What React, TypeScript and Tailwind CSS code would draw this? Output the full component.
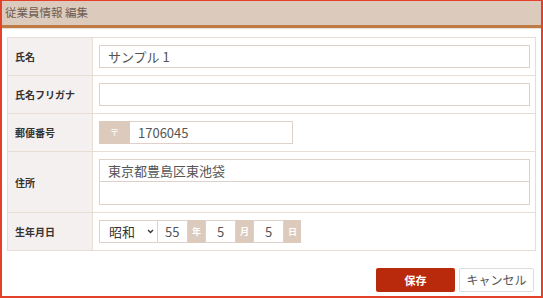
import React from "react";

const font = { fontFamily: '"Noto Sans CJK JP", "Noto Sans", sans-serif' };

const Row: React.FC<{ label: string; children: React.ReactNode; last?: boolean }> = ({ label, children, last }) => (
  <div className={`flex ${last ? "" : "border-b border-[#e8ddd5]"}`}>
    <div className="w-[85px] shrink-0 bg-[#f5f0f0] border-r border-[#e8ddd5] flex items-center pl-[7px] text-[10px] font-bold text-[#333]">
      {label}
    </div>
    <div className="flex-1 pl-[6px] pr-[5px] py-[7px] flex flex-col">{children}</div>
  </div>
);

const Unit: React.FC<{ text: string }> = ({ text }) => (
  <div className="w-[17px] h-[23px] bg-[#dccbbd] text-white text-[9px] font-bold flex items-center justify-center">
    {text}
  </div>
);

export default function App() {
  return (
    <div style={font} className="w-[543px] h-[298px] border-2 border-t border-[#e4412a] bg-white flex flex-col">
      <div className="h-[27px] shrink-0 bg-[#dccbbd] border-b-[3px] border-[#c07a43] flex items-center pl-[3px] text-[11.5px] text-[#6e5d52]">
        従業員情報 編集
      </div>
      <div className="h-px shrink-0 bg-[#eadfd6]" />
      <div className="px-[5px] pt-[8px]">
        <div className="border border-[#e8ddd5] flex flex-col">
          <Row label="氏名">
            <div className="h-[23px] border border-[#ddd1c9] flex items-center pl-[8px] text-[13px] text-[#555]">
              サンプル 1
            </div>
          </Row>
          <Row label="氏名フリガナ">
            <div className="h-[23px] border border-[#ddd1c9]" />
          </Row>
          <Row label="郵便番号">
            <div className="flex">
              <div className="w-[31px] h-[23px] bg-[#dccbbd] text-white text-[9px] flex items-center justify-center">〒</div>
              <div className="w-[163px] h-[23px] border border-[#ddd1c9] border-l-0 flex items-center pl-[8px] text-[13px] text-[#555]">
                1706045
              </div>
            </div>
          </Row>
          <Row label="住所">
            <div className="h-[23px] border border-[#ddd1c9] flex items-center pl-[8px] text-[13px] text-[#555]">
              東京都豊島区東池袋
            </div>
            <div className="h-[23px] border border-[#ddd1c9] border-t-0" />
          </Row>
          <Row label="生年月日" last>
            <div className="flex">
              <div className="relative w-[59px] h-[23px] border border-[#ddd1c9] flex items-center pl-[9px] text-[13px] text-[#333]">
                昭和
                <svg className="absolute right-[3px] top-[8px]" width="7" height="5" viewBox="0 0 7 5">
                  <path d="M1 1 L3.5 3.5 L6 1" fill="none" stroke="#333" strokeWidth="1.3" />
                </svg>
              </div>
              <div className="w-[30px] h-[23px] border border-[#ddd1c9] border-l-0 flex items-center pl-[7px] text-[13px] text-[#555]">55</div>
              <Unit text="年" />
              <div className="w-[31px] h-[23px] border border-[#ddd1c9] flex items-center justify-center text-[13px] text-[#555]">5</div>
              <Unit text="月" />
              <div className="w-[31px] h-[23px] border border-[#ddd1c9] flex items-center justify-center text-[13px] text-[#555]">5</div>
              <Unit text="日" />
            </div>
          </Row>
        </div>
      </div>
      <div className="flex justify-end gap-[4px] pr-[7px] pt-[17px]">
        <button className="w-[79px] h-[24px] rounded-[2px] bg-[#b92a0c] text-white text-[11px] font-bold">保存</button>
        <button className="w-[75px] h-[24px] rounded-[2px] bg-white border border-[#ddd] text-[#555] text-[12px]">キャンセル</button>
      </div>
    </div>
  );
}
